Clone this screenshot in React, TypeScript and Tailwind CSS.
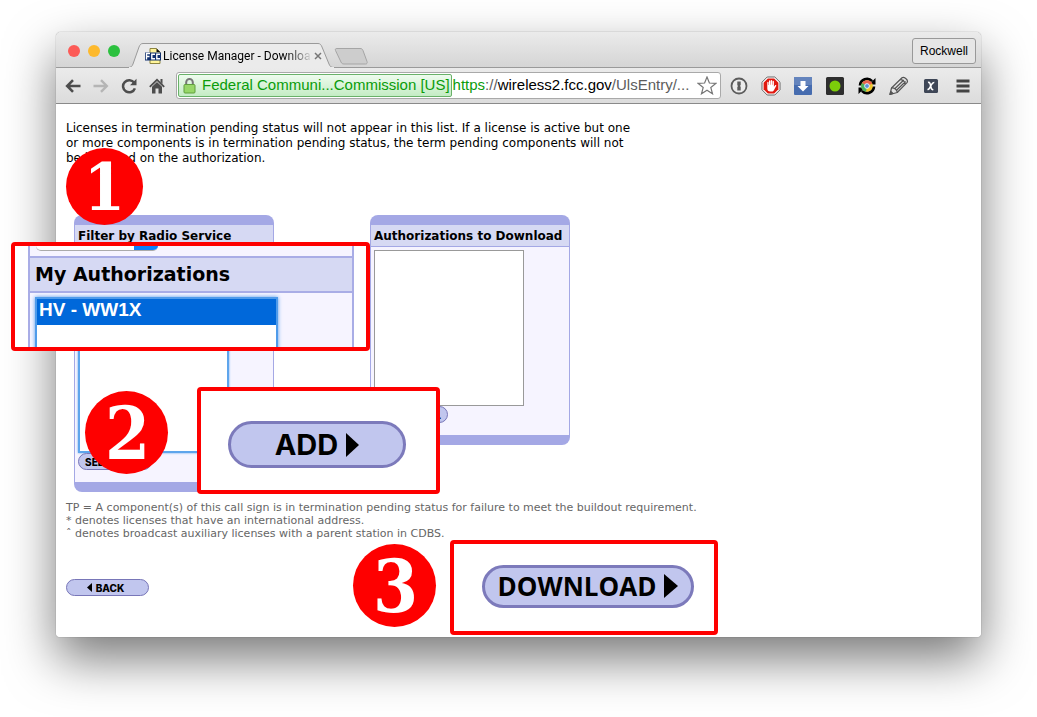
import type { ReactNode } from 'react';

const extensions: { name: string; icon: ReactNode }[] = [
  {
    name: 'Passwords',
    icon: (
      <>
        <circle cx="10" cy="10" r="7.5" fill="#ececec" stroke="#5c5c5c" strokeWidth="1.8" />
        <path d="M8.3 5.5h3.4v3.6l-.8.8.8.8v3.8H8.3v-3.6l.8-.8-.8-.8z" fill="#5c5c5c" />
      </>
    ),
  },
  {
    name: 'Ad blocker',
    icon: (
      <>
        <path d="M6.2 1h7.6L19 6.2v7.6L13.8 19H6.2L1 13.8V6.2z" fill="#fff" stroke="#666" />
        <path d="M6.8 2.6h6.4l4.2 4.2v6.4l-4.2 4.2H6.8l-4.2-4.2V6.8z" fill="#e0190f" />
        <path
          d="M6.3 10V6.4c0-.9 1.3-.9 1.3 0V9h.4V5c0-.9 1.4-.9 1.4 0v3.8h.4V4.6c0-.9 1.4-.9 1.4 0v4.2h.4V5.5c0-.9 1.3-.9 1.3 0v5.3l1.2-1.5c.6-.6 1.5 0 1.1.7l-2.3 4.3c-.5.9-1.1 1.3-2 1.3H9.3c-2 0-3-1.3-3-3z"
          fill="#fff"
        />
      </>
    ),
  },
  {
    name: 'Downloads',
    icon: (
      <>
        <rect x="1" y="1" width="18" height="18" rx="1" fill="#466caf" />
        <rect x="1" y="1" width="18" height="8" rx="1" fill="#6484bd" />
        <path d="M7.5 5h5v5h3L10 15.5 4.5 10h3z" fill="#fff" />
      </>
    ),
  },
  {
    name: 'Recorder',
    icon: (
      <>
        <rect x="1" y="1" width="18" height="18" rx="1.5" fill="#2e2e2e" />
        <circle cx="10" cy="10" r="5.5" fill="#7ccc0a" />
      </>
    ),
  },
  {
    name: 'Reload extensions',
    icon: (
      <>
        <path d="M3.2 9.5A6.8 6.8 0 0 1 15 5.2M16.800 10.500A6.800 6.800 0 0 1 5 14.800" fill="none" stroke="#000" strokeWidth="3" />
        <path d="M18.500 2v6.500H12zM1.500 18v-6.500H8z" fill="#000" />
        <circle cx="10" cy="10" r="5.8" fill="#efc62c" />
        <path d="M10 10 5 7A5.800 5.800 0 0 1 15.300 7.600z" fill="#e8604f" />
        <path d="M10 10 5 7A5.800 5.800 0 0 0 9 15.700z" fill="#4cb05f" />
        <circle cx="10" cy="10" r="2.4" fill="#5b8fd8" stroke="#fff" strokeWidth=".8" />
      </>
    ),
  },
  {
    name: 'Annotate',
    icon: (
      <g fill="none" stroke="#555" strokeWidth="1.2" strokeLinejoin="round">
        <path d="M1 18.500 2.500 12 13 1.800c1.800-1.600 6.500 1.800 5.200 4.500L8.200 16.500z" fill="#e2e2e2" />
        <path d="M2.500 12c2.500-.5 5.800 1.800 5.700 4.500M5.500 13 14.800 4M7.300 14.500l9.300-9M11.200 3.600c2.300 0 5 2 5.200 4.500" />
        <path d="m1 18.500.8-3 2.200 2z" fill="#555" />
      </g>
    ),
  },
  {
    name: 'Close all',
    icon: (
      <>
        <rect x="3" y="3" width="14" height="14" rx="1.5" fill="#3e4656" />
        <path d="M7 6.500c1.700-.6 2.200 1 2.700 3.500s1 4.200 2.600 3.400M13.300 6.500c-1.800-.3-2.700 2-3.600 3.500s-1.500 3.700-3.200 3.300" fill="none" stroke="#fff" strokeWidth="1.6" />
      </>
    ),
  },
  {
    name: 'Menu',
    icon: <path d="M3.500 5h13M3.500 10h13M3.500 15h13" stroke="#444" strokeWidth="3" strokeLinecap="butt" />,
  },
];

const navButtons: { name: string; icon: ReactNode }[] = [
  {
    name: 'Back',
    icon: <path d="M15.5 8H2.5M8 2.2 2.2 8 8 13.8" fill="none" stroke="#4d4d4d" strokeWidth="2.6" />,
  },
  {
    name: 'Forward',
    icon: <path d="M.5 8h13M8 2.2 13.8 8 8 13.8" fill="none" stroke="#b5b5b5" strokeWidth="2.4" />,
  },
  {
    name: 'Reload',
    icon: (
      <>
        <path d="M13.2 4.8A6.1 6.1 0 1 0 13.9 10.300" fill="none" stroke="#4d4d4d" strokeWidth="2.5" />
        <path d="M15.500.8v6.500H9z" fill="#4d4d4d" />
      </>
    ),
  },
  {
    name: 'Home',
    icon: (
      <>
        <path d="M.8 8.800 8 1.800l7.200 7" fill="none" stroke="#4d4d4d" strokeWidth="1.8" />
        <path d="M11.500 1h2v5l-2-2zM3 8.800 8 4l5 4.800V15.500H9.500V10.500h-3v5H3z" fill="#4d4d4d" />
      </>
    ),
  },
];

function TitleBar() {
  return (
    <div className="flex h-9 items-end border-b border-[#9a9a9a] bg-linear-to-b from-[#ebebeb] to-[#d5d5d5] pl-3">
      <div className="flex gap-2 pb-[10px]">
        <span className="size-3 rounded-full bg-[#fc5b57]" />
        <span className="size-3 rounded-full bg-[#fdb92d]" />
        <span className="size-3 rounded-full bg-[#2cc13f]" />
      </div>
      <div className="relative -mb-px ml-2 flex h-[25px] w-[210px] items-center pl-[17px] pr-3">
        <svg className="absolute inset-0" width="210" height="25" viewBox="0 0 210 25">
          <path
            d="M0 24.500c3 0 4-1 5-3.500L11 4C12 1.500 13 .5 15 .5H190c2 0 3 1 4 3.500l7 17c1 2.500 2 3.500 5 3.500"
            fill="#ebebeb"
            stroke="#9a9a9a"
          />
          <path d="M1 24.500H206" stroke="#ebebeb" />
        </svg>
        <svg className="relative shrink-0" width="17" height="16" viewBox="0 0 17 16">
          <path d="M5 .5h6.500L15 4v11.500H5z" fill="#fff59a" stroke="#8d8540" />
          <path d="M11.500.5V4H15z" fill="#111" />
          <rect x="0" y="4.500" width="16" height="8" fill="#10306e" />
          <path d="M1.500 11.500v-6H5M1.500 8.500h3M10 6.200H6.800v4.600H10M15 6.200h-3.200v4.600H15" fill="none" stroke="#fff" strokeWidth="1.4" />
        </svg>
        <span className="relative ml-px flex-1 whitespace-nowrap bg-linear-to-r from-black from-80% to-[#d0d0d0] bg-clip-text font-['Roboto',sans-serif] text-xs text-transparent">
          License Manager - Downloa
        </span>
        <button aria-label="Close tab" className="relative ml-1 mr-[6px]">
          <svg width="8" height="8" viewBox="0 0 8 8">
            <path d="m1 1 6 6M7 1 1 7" stroke="#777" strokeWidth="1.5" />
          </svg>
        </button>
      </div>
      <button aria-label="New tab" className="-ml-1 pb-[2px]">
        <svg width="34" height="17" viewBox="0 0 34 17">
          <path d="M3 .5h23c1.500 0 2.500.5 3 2l4 11c.5 1.500 0 2.500-1.500 2.500H10c-1.500 0-2.500-.5-3-2L1.500 2.500C1 1 1.500.5 3 .5z" fill="#cdcdcd" stroke="#a5a5a5" />
        </svg>
      </button>
      <button className="mb-[3px] ml-auto mr-[5px] h-[26px] w-16 rounded-[3px] border border-[#999] bg-[#e6e6e6] text-xs text-black">
        Rockwell
      </button>
    </div>
  );
}

function Toolbar() {
  return (
    <div className="flex h-9 items-center border-b border-[#8a8a8a] bg-linear-to-b from-[#ebebeb] to-[#dcdcdc] pl-[9px] pr-2">
      <div className="flex gap-3">
        {navButtons.map((item) => (
          <button key={item.name} aria-label={item.name}>
            <svg className="block" width="16" height="16" viewBox="0 0 16 16">
              {item.icon}
            </svg>
          </button>
        ))}
      </div>
      <div className="ml-[11px] mr-2 flex h-[27px] min-w-0 flex-1 items-center rounded-[3px] border border-[#a9a9a9] bg-white p-px text-[15px]">
        <div className="flex h-full shrink-0 items-center whitespace-nowrap rounded-[2px] border border-[#69b169] bg-linear-to-b from-[#eefbee] to-[#c4ecc4] pl-1 pr-px text-[#0a9c0a]">
          <svg className="mr-[6px]" width="13" height="16" viewBox="0 0 13 16">
            <path d="M3.200 7V4.300a3.200 3.200 0 0 1 6.600 0V7" fill="none" stroke="#777" strokeWidth="2" />
            <rect x="1" y="6.500" width="11" height="8.500" rx="1" fill="#97d768" stroke="#5f9f3d" />
          </svg>
          Federal Communi...Commission [US]
        </div>
        <div className="ml-px flex-1 whitespace-nowrap text-[#5c5c5c]">
          <span className="text-[#0a9c0a]">https</span>://<span className="text-black">wireless2.fcc.gov</span>/UlsEntry/...
        </div>
        <button aria-label="Bookmark" className="mr-[2px] shrink-0">
          <svg className="block" width="20" height="19" viewBox="0 0 20 19">
            <path d="m10 1 2.400 6 6.400.4-5 4.100 1.700 6.300L10 14.300l-5.500 3.500 1.700-6.300-5-4.100 6.400-.4z" fill="#fff" stroke="#777" strokeWidth="1.2" />
          </svg>
        </button>
      </div>
      <div className="flex gap-3">
        {extensions.map((item) => (
          <button key={item.name} aria-label={item.name}>
            <svg className="block" width="20" height="20" viewBox="0 0 20 20">
              {item.icon}
            </svg>
          </button>
        ))}
      </div>
    </div>
  );
}

function PanelHeading({ children }: { children?: ReactNode }) {
  return (
    <h2 className="flex h-[22px] items-center whitespace-nowrap border-b border-[#a4a8e5] bg-[#d6d9f3] pl-[3px] text-xs font-bold">
      {children}
    </h2>
  );
}

function Panel({ children }: { children: ReactNode }) {
  return (
    <div className="w-[200px]">
      <div className="h-[10px] rounded-t-lg bg-[#a4a8e5]" />
      <div className="border-x border-[#a4a8e5] bg-[#f6f4ff] pb-3">{children}</div>
      <div className="h-[10px] rounded-b-lg bg-[#a4a8e5]" />
    </div>
  );
}

function SelectAllButton() {
  return (
    <button className="ml-[3px] block h-[17px] w-[74px] whitespace-nowrap rounded-full border border-[#7876b8] bg-[#c1c6ee] font-['Inter',sans-serif] text-[10px] leading-none font-extrabold">
      SELECT ALL
    </button>
  );
}

function Page() {
  return (
    <main className="bg-white pl-[10px] pt-[17px] pb-[41px] font-['DejaVu_Sans',sans-serif] text-black">
      <p className="text-xs leading-[15px] whitespace-nowrap">
        Licenses in termination pending status will not appear in this list. If a license is active but one
        <br />
        or more components is in termination pending status, the term pending components will not
        <br />
        be included on the authorization.
      </p>

      {/* Panels */}
      <div className="mt-[49px] ml-2 flex items-start gap-24">
        <Panel>
          <PanelHeading>Filter by Radio Service</PanelHeading>
          <div className="h-[27px] px-[3px] pt-1">
            <select aria-label="Radio service" className="h-[18px] w-[74px] rounded-sm border border-[#bbb] bg-white" />
          </div>
          <PanelHeading />
          <select
            multiple
            aria-label="My authorizations"
            className="mx-[3px] mt-[2px] block h-[155px] w-[151px] border-2 border-[#5ea5ec] bg-white shadow-[0_0_2px_#5ea5ec] outline-none"
          />
          <SelectAllButton />
        </Panel>
        <Panel>
          <PanelHeading>Authorizations to Download</PanelHeading>
          <select
            multiple
            aria-label="Authorizations to download"
            className="mx-[3px] mt-[3px] block h-[156px] w-[150px] border border-[#999] bg-white"
          />
          <SelectAllButton />
        </Panel>
      </div>

      <p className="mt-[9px] text-[11px] leading-[13px] whitespace-nowrap text-[#666]">
        TP = A component(s) of this call sign is in termination pending status for failure to meet the buildout requirement.
        <br />
        * denotes licenses that have an international address.
        <br />
        ˆ denotes broadcast auxiliary licenses with a parent station in CDBS.
      </p>

      <button className="mt-[39px] flex h-[17px] w-[83px] items-center justify-center gap-1 rounded-full border border-[#7876b8] bg-[#c1c6ee] pr-1 font-['Inter',sans-serif] text-[10px] leading-none font-extrabold">
        <svg width="5" height="9" viewBox="0 0 5 9">
          <path d="M5 0v9L0 4.500z" />
        </svg>
        BACK
      </button>
    </main>
  );
}

function AuthorizationsCallout() {
  return (
    <div className="absolute top-[242px] left-[11px] h-[109px] w-[359px] overflow-hidden rounded-[4px] border-4 border-[#fe0000] bg-white px-[13px]">
      <div className="h-full w-[326px] border-x-2 border-[#a9ade6] bg-[#f6f4ff]">
        <div className="ml-[6px] flex h-[5px] w-[122px] overflow-hidden rounded-b-lg border-b border-[#aaa] bg-white">
          <span className="ml-auto w-6 bg-[#0d80fa]" />
        </div>
        <div className="mt-[5px] flex h-[37px] items-center border-y-2 border-[#a9ade6] bg-[#d6d9f3] pl-[5px] font-['DejaVu_Sans',sans-serif] text-[19px] font-bold">
          My Authorizations
        </div>
        <select
          multiple
          aria-label="Selected authorization"
          className="mt-[4px] ml-[5px] block h-[90px] w-[243px] overflow-hidden border-2 border-[#4f9bea] bg-white text-[19px] shadow-[0_0_4px_#4f9bea] outline-none"
        >
          <option className="h-[26px] bg-[#0068da] px-[2px] py-0 leading-[26px] font-bold text-white">HV - WW1X</option>
        </select>
      </div>
    </div>
  );
}

function AddCallout() {
  return (
    <div className="absolute top-[387px] left-[197px] flex h-[107px] w-[243px] items-center rounded-[4px] border-4 border-[#fe0000] bg-white pl-[27px] pt-2">
      <button className="flex h-[47px] w-[178px] items-center justify-center gap-2 rounded-full border-3 border-[#7c7abb] bg-[#c1c6ee] font-['Inter',sans-serif] text-[29px] leading-none font-bold">
        ADD
        <svg width="13" height="24" viewBox="0 0 13 24">
          <path d="M0 0 13 12 0 24z" />
        </svg>
      </button>
    </div>
  );
}

function DownloadCallout() {
  return (
    <div className="absolute top-[540px] left-[450px] flex h-[95px] w-[268px] items-center rounded-[4px] border-4 border-[#fe0000] bg-white pb-[2px] pl-7">
      <button className="flex h-[43px] w-[212px] items-center justify-center gap-2 rounded-full border-3 border-[#7c7abb] bg-[#c1c6ee] pb-[2px] font-['Open_Sans',sans-serif] text-[26px] leading-none font-bold">
        DOWNLOAD
        <svg width="14" height="24" viewBox="0 0 14 24">
          <path d="M0 0 14 12 0 24z" />
        </svg>
      </button>
    </div>
  );
}

export default function App() {
  return (
    <div className="relative min-h-screen overflow-hidden bg-white px-14 pt-8 pb-20 font-['Liberation_Sans',Arial,sans-serif]">
      <div className="overflow-hidden rounded-t-[5px] rounded-b-[4px] shadow-[0_22px_50px_rgba(0,0,0,0.53),0_0_1px_rgba(0,0,0,0.6)]">
        <TitleBar />
        <Toolbar />
        <Page />
      </div>

      {/* Numbered steps */}
      <AuthorizationsCallout />
      <AddCallout />
      <DownloadCallout />
      <div className="absolute top-[148px] left-[66px] flex size-[77px] items-center justify-center rounded-full bg-[#fe0000] font-['DejaVu_Serif_Condensed','DejaVu_Serif',serif] text-[66px] leading-none font-bold text-white">
        1
      </div>
      <div className="absolute top-[391px] left-[85px] flex size-[83px] items-center justify-center rounded-full bg-[#fe0000] pt-[3px] pl-[2px] font-['DejaVu_Serif_Condensed','DejaVu_Serif',serif] text-[72px] leading-none font-bold text-white">
        2
      </div>
      <div className="absolute top-[544px] left-[353px] flex size-[83px] items-center justify-center rounded-full bg-[#fe0000] pt-[3px] pl-[2px] font-['DejaVu_Serif_Condensed','DejaVu_Serif',serif] text-[72px] leading-none font-bold text-white">
        3
      </div>
    </div>
  );
}
